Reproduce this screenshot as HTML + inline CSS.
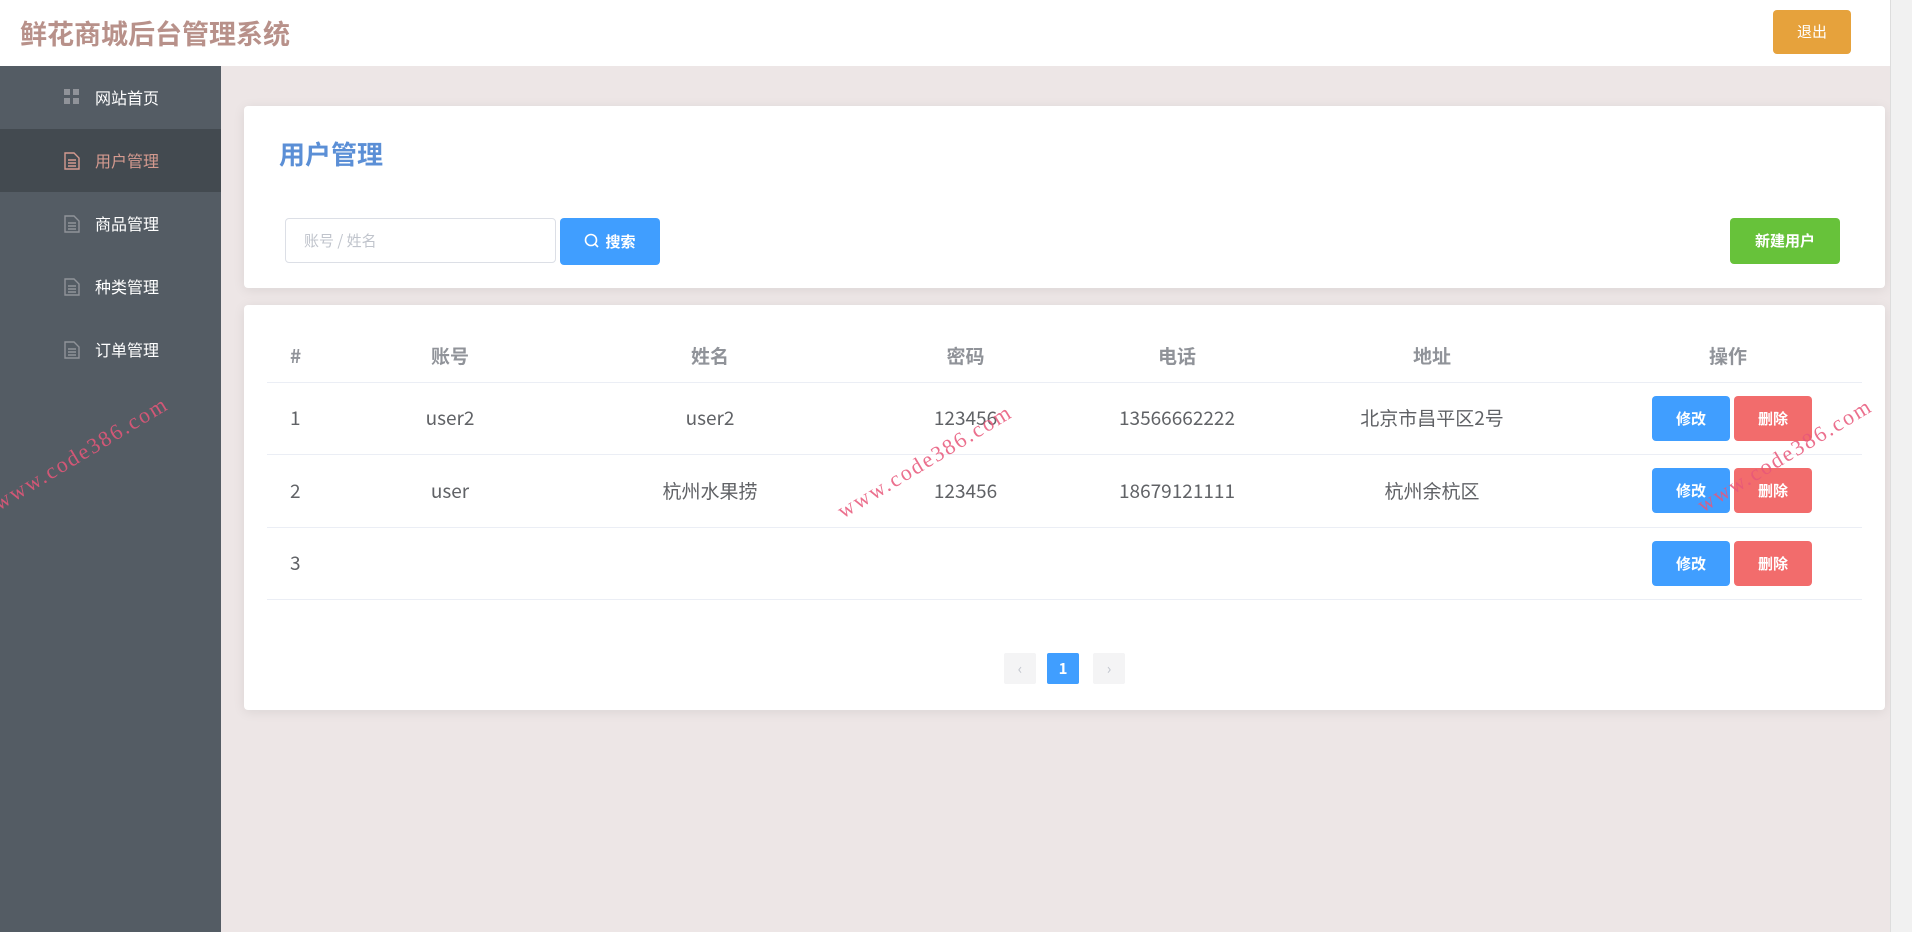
<!DOCTYPE html>
<html><head><meta charset="utf-8"><style>
*{margin:0;padding:0;box-sizing:border-box}
body{width:1912px;height:932px;overflow:hidden;background:#ede6e6;font-family:"Noto Sans CJK SC","Liberation Sans",sans-serif;position:relative}
.hdr{position:absolute;left:0;top:0;width:1890px;height:66px;background:#fff}
.title{position:absolute;left:20px;top:13px;font-size:27px;font-weight:bold;color:#b8918a;line-height:40px}
.logout{position:absolute;left:1773px;top:10px;width:78px;height:44px;background:#e6a23c;border-radius:4px;color:#fff;font-size:15px;text-align:center;line-height:44px}
.sb{position:absolute;right:0;top:0;width:22px;height:932px;background:#f1f1f1;border-left:1px solid #ddd}
.side{position:absolute;left:0;top:66px;width:221px;height:866px;background:#545c64}
.item{height:63px;line-height:63px;color:#fff;font-size:16px;padding-left:95px;position:relative;padding-top:0}
.item.act{background:#434a50;color:#d49a8f}
.item svg{position:absolute;left:64px;top:23px}
.card{position:absolute;left:244px;width:1641px;background:#fff;border-radius:4px;box-shadow:0 2px 12px rgba(0,0,0,.08)}
.h1{position:absolute;left:35px;top:29px;font-size:26px;font-weight:bold;color:#5b8fd6}
.inp{position:absolute;left:41px;top:112px;width:271px;height:45px;border:1px solid #dcdfe6;border-radius:4px;color:#c0c4cc;font-size:15px;line-height:43px;padding-left:18px}
.btn{position:absolute;color:#fff;font-size:15px;font-weight:bold;text-align:center;border-radius:4px}
table{position:absolute;left:23px;top:24px;width:1595px;border-collapse:collapse;font-size:19px;color:#606266}
th{height:53px;color:#909399;font-weight:bold;font-size:19px;border-bottom:1px solid #ebeef5}
td{height:72.5px;text-align:center;border-bottom:1px solid #ebeef5;line-height:24px}
.ob{display:inline-block;width:78px;height:45px;line-height:45px;color:#fff;font-size:15px;font-weight:bold;border-radius:4px;margin:0 2px;vertical-align:middle}
.pg{position:absolute;top:348px;width:32px;height:31px;background:#f4f4f5;border-radius:2px;text-align:center;line-height:31px;color:#c0c4cc;font-size:15px}
.wm{position:absolute;color:#e8577a;font-family:"Liberation Serif",serif;font-size:22px;transform:rotate(-31deg);transform-origin:left bottom;letter-spacing:2px;opacity:.85}
</style></head><body>
<div class="hdr"><div class="title">鲜花商城后台管理系统</div><div class="logout">退出</div></div>
<div class="side">
<div class="item"><svg width="16" height="16"><rect x="0" y="0" width="6" height="6" fill="#909399"/><rect x="9" y="0" width="6" height="6" fill="#909399"/><rect x="0" y="9" width="6" height="6" fill="#909399"/><rect x="9" y="9" width="6" height="6" fill="#909399"/></svg>网站首页</div>
<div class="item act"><svg width="16" height="18"><path d="M1 1h9l5 5v11H1z M4 8h8 M4 11h8 M4 14h8" fill="none" stroke="#d49a8f" stroke-width="1.4"/></svg>用户管理</div>
<div class="item"><svg width="16" height="18"><path d="M1 1h9l5 5v11H1z M4 8h8 M4 11h8 M4 14h8" fill="none" stroke="#909399" stroke-width="1.4"/></svg>商品管理</div>
<div class="item"><svg width="16" height="18"><path d="M1 1h9l5 5v11H1z M4 8h8 M4 11h8 M4 14h8" fill="none" stroke="#909399" stroke-width="1.4"/></svg>种类管理</div>
<div class="item"><svg width="16" height="18"><path d="M1 1h9l5 5v11H1z M4 8h8 M4 11h8 M4 14h8" fill="none" stroke="#909399" stroke-width="1.4"/></svg>订单管理</div>
</div>
<div class="card" style="top:106px;height:182px">
<div class="h1">用户管理</div>
<div class="inp">账号 / 姓名</div>
<div class="btn" style="left:316px;top:112px;width:100px;height:47px;line-height:47px;background:#409eff"><svg width="16" height="16" style="vertical-align:-2px;margin-right:5px"><circle cx="7" cy="7" r="5.5" fill="none" stroke="#fff" stroke-width="1.6"/><path d="M11 11l3 3" stroke="#fff" stroke-width="1.6"/></svg>搜索</div>
<div class="btn" style="left:1486px;top:112px;width:110px;height:46px;line-height:46px;background:#67c23a">新建用户</div>
</div>
<div class="card" style="top:305px;height:405px">
<table>
<tr><th style="width:52px;text-align:left;padding-left:23px">#</th><th style="width:262px">账号</th><th style="width:258px">姓名</th><th style="width:253px">密码</th><th style="width:170px">电话</th><th style="width:340px">地址</th><th style="padding-right:8px">操作</th></tr>
<tr><td style="text-align:left;padding-left:23px">1</td><td>user2</td><td>user2</td><td>123456</td><td>13566662222</td><td>北京市昌平区2号</td><td><span class="ob" style="background:#409eff">修改</span><span class="ob" style="background:#f26c6c">删除</span></td></tr>
<tr><td style="text-align:left;padding-left:23px">2</td><td>user</td><td>杭州水果捞</td><td>123456</td><td>18679121111</td><td>杭州余杭区</td><td><span class="ob" style="background:#409eff">修改</span><span class="ob" style="background:#f26c6c">删除</span></td></tr>
<tr><td style="text-align:left;padding-left:23px">3</td><td></td><td></td><td></td><td></td><td></td><td><span class="ob" style="background:#409eff">修改</span><span class="ob" style="background:#f26c6c">删除</span></td></tr>
</table>
<div class="pg" style="left:760px">‹</div>
<div class="pg" style="left:803px;background:#409eff;color:#fff;font-weight:bold">1</div>
<div class="pg" style="left:849px">›</div>
</div>
<div class="sb"></div>
<div class="wm" style="left:2px;top:490px">www.code386.com</div>
<div class="wm" style="left:846px;top:498px">www.code386.com</div>
<div class="wm" style="left:1706px;top:492px">www.code386.com</div>
</body></html>
